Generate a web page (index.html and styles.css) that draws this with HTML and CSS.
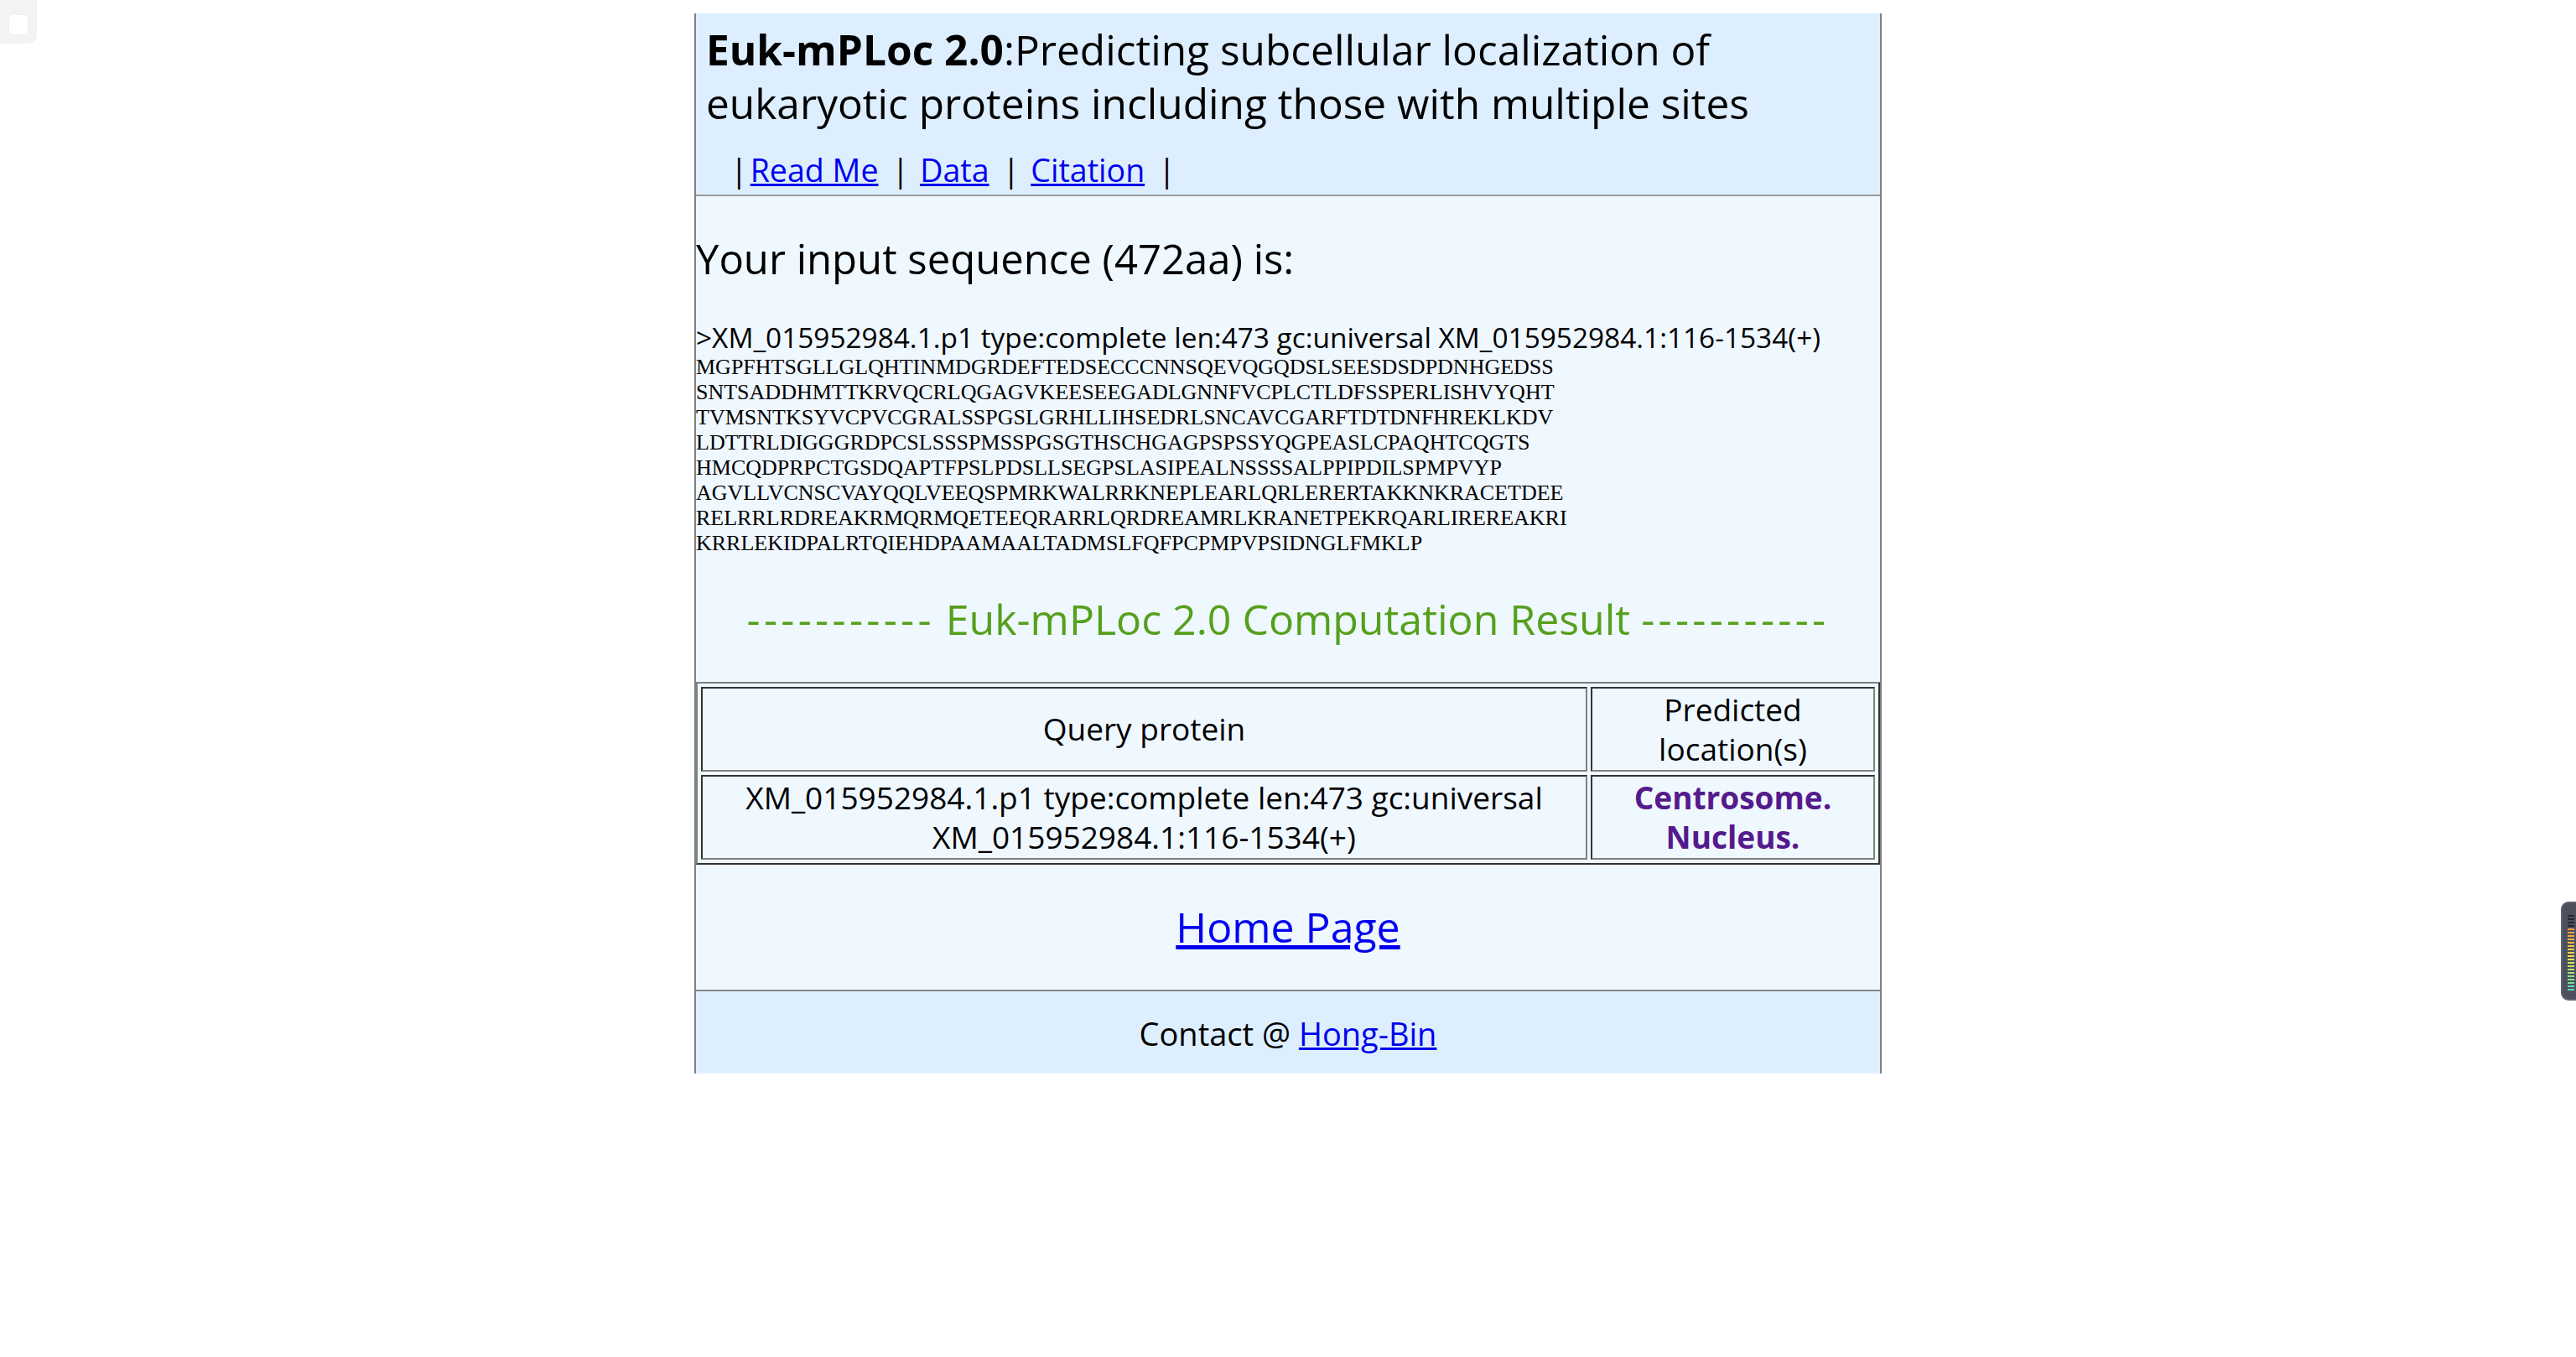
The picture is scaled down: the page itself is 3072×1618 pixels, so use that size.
FILE: index.html
```html
<!DOCTYPE html>
<html lang="en">
<head>
<meta charset="utf-8">
<title>Euk-mPLoc 2.0 Result</title>
<link rel="stylesheet" href="styles.css">
</head>
<body>
<div class="ext-badge"><span class="ext-square"></span></div>
<div class="meter"><div class="meter-bars"></div></div>

<div class="page">
  <header class="head">
    <h1 class="title"><b>Euk-mPLoc 2.0</b>:Predicting subcellular localization of<br>eukaryotic proteins including those with multiple sites</h1>
    <div class="links">
      <span class="sep first">|</span><a href="#">Read Me</a><span class="sep">|</span><a href="#">Data</a><span class="sep">|</span><a href="#">Citation</a><span class="sep">|</span>
    </div>
  </header>

  <main class="content">
    <h2 class="seq-title">Your input sequence (472aa) is:</h2>
    <div class="seq-name">&gt;XM_015952984.1.p1 type:complete len:473 gc:universal XM_015952984.1:116-1534(+)</div>
    <div class="seq">MGPFHTSGLLGLQHTINMDGRDEFTEDSECCCNNSQEVQGQDSLSEESDSDPDNHGEDSS<br>SNTSADDHMTTKRVQCRLQGAGVKEESEEGADLGNNFVCPLCTLDFSSPERLISHVYQHT<br>TVMSNTKSYVCPVCGRALSSPGSLGRHLLIHSEDRLSNCAVCGARFTDTDNFHREKLKDV<br>LDTTRLDIGGGRDPCSLSSSPMSSPGSGTHSCHGAGPSPSSYQGPEASLCPAQHTCQGTS<br>HMCQDPRPCTGSDQAPTFPSLPDSLLSEGPSLASIPEALNSSSSALPPIPDILSPMPVYP<br>AGVLLVCNSCVAYQQLVEEQSPMRKWALRRKNEPLEARLQRLERERTAKKNKRACETDEE<br>RELRRLRDREAKRMQRMQETEEQRARRLQRDREAMRLKRANETPEKRQARLIREREAKRI<br>KRRLEKIDPALRTQIEHDPAAMAALTADMSLFQFPCPMPVPSIDNGLFMKLP</div>

    <h2 class="result-title"><span class="dash">-----------</span> Euk-mPLoc 2.0 Computation Result <span class="dash">-----------</span></h2>

    <table class="result">
      <colgroup><col class="col-query"><col class="col-loc"></colgroup>
      <tr>
        <td>Query protein</td>
        <td>Predicted location(s)</td>
      </tr>
      <tr>
        <td>XM_015952984.1.p1 type:complete len:473 gc:universal XM_015952984.1:116-1534(+)</td>
        <td class="loc">Centrosome. Nucleus.</td>
      </tr>
    </table>

    <div class="home"><a href="#">Home Page</a></div>
  </main>

  <footer class="foot">Contact @ <a href="#">Hong-Bin</a></footer>
</div>
</body>
</html>
```
FILE: styles.css
```css
html, body {
  background: #ffffff;
}

body {
  margin: 16px 0 0;
  font-family: "Open Sans", "Noto Sans", sans-serif;
  color: #000000;
}

a {
  color: #0000ee;
}

.page {
  width: 1412px;
  margin: 0 auto;
  border-left: 2px solid #808080;
  border-right: 2px solid #808080;
}

/* header */
.head {
  background: #ddeeff;
  padding: 11px 12px 5px;
  border-bottom: 2px solid #9a9a9a;
}

.title {
  margin: 0;
  font-size: 49.6px;
  line-height: 64px;
  font-weight: normal;
}

.title b {
  font-weight: bold;
}

.links {
  display: flex;
  align-items: baseline;
  margin-top: 24px;
  padding-left: 29px;
  font-size: 37.6px;
  line-height: 48px;
}

.sep {
  margin: 0 13px 0 16px;
}

.sep.first {
  margin: 0 3px 0 0;
}

/* main section */
.content {
  background: #eff7ff;
  padding-bottom: 42px;
}

.seq-title {
  margin: 0;
  padding-top: 42px;
  font-size: 49px;
  line-height: 64px;
  font-weight: normal;
}

.seq-name {
  margin-top: 41px;
  font-size: 33.4px;
  line-height: 42px;
}

.seq {
  font-family: "Liberation Serif", "Times New Roman", serif;
  font-size: 26px;
  line-height: 30px;
}

.result-title {
  margin: 42px 0 0;
  text-align: center;
  color: #55a01c;
  font-size: 50px;
  line-height: 66px;
  font-weight: normal;
}

.dash {
  letter-spacing: 4.3px;
}

.result {
  margin-top: 42px;
  width: 100%;
  table-layout: fixed;
  border-collapse: separate;
  border-spacing: 4px;
  border-style: solid;
  border-width: 2px;
  border-color: #808080 #333333 #333333 #808080;
  font-size: 37px;
  line-height: 46.5px;
}

.col-loc {
  width: 339px;
}

.result td {
  padding: 2px;
  text-align: center;
  vertical-align: middle;
  border-style: solid;
  border-width: 2px;
  border-color: #333333 #808080 #808080 #333333;
}

.result td.loc {
  color: #551a8b;
  font-weight: bold;
}

.home {
  margin-top: 41px;
  text-align: center;
  font-size: 50px;
  line-height: 66px;
}

/* footer */
.foot {
  background: #ddeeff;
  border-top: 2px solid #888888;
  padding: 26px 0 24px;
  text-align: center;
  font-size: 38px;
  line-height: 48px;
}

/* overlays from the browser chrome */
.ext-badge {
  position: fixed;
  left: 0;
  top: 0;
  width: 44px;
  height: 52px;
  background: #f3f3f3;
  border-bottom-right-radius: 10px;
  display: flex;
  align-items: center;
  justify-content: center;
  padding-top: 6px;
  box-sizing: border-box;
}

.ext-square {
  width: 22px;
  height: 23px;
  background: #ffffff;
  border-radius: 5px;
  box-shadow: 0 0 2px #ececec;
}

.meter {
  position: fixed;
  right: -10px;
  top: 1075px;
  width: 28px;
  height: 118px;
  background: #4b505c;
  border: 2px solid #5e6370;
  border-radius: 9px;
  box-sizing: border-box;
  padding: 14px 0 0 6px;
}

.meter-bars {
  width: 8px;
  height: 90px;
  background: linear-gradient(to bottom,
    #25282f 0, #25282f 16px,
    #f79845 16px, #fbb34a 30px, #f8d64e 44px,
    #e9e65a 54px, #bfe36e 64px, #8fe08c 74px, #4fdcbf 90px);
  -webkit-mask: repeating-linear-gradient(to bottom, #000 0, #000 2px, transparent 2px, transparent 4px);
  mask: repeating-linear-gradient(to bottom, #000 0, #000 2px, transparent 2px, transparent 4px);
}
```
